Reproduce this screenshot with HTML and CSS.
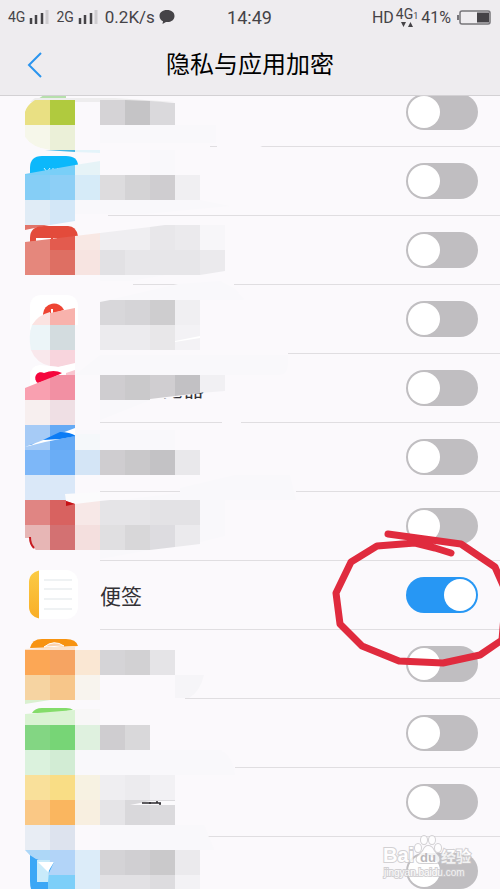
FILE: index.html
```html
<!DOCTYPE html>
<html lang="zh-CN">
<head>
    <meta charset="UTF-8">
    <meta name="viewport" content="width=device-width, initial-scale=1.0">
    <title>隐私与应用加密</title>
    <link rel="stylesheet" href="styles.css">
</head>
<body>
<header class="header">
    <div class="status">
        <div class="status-left">
            <span class="net">4G</span>
            <svg class="signal" width="20" height="16" viewBox="0 0 20 16"><path d="M2 9v6M7 6v9M13 4v11" stroke="#454347" stroke-width="2.500"/><path d="M18 1v14" stroke="#cfcdd0" stroke-width="3"/></svg>
            <span class="net">2G</span>
            <svg class="signal" width="20" height="16" viewBox="0 0 20 16"><path d="M2 9v6M7 6v9M13 4v11" stroke="#454347" stroke-width="2.500"/><path d="M18 1v14" stroke="#cfcdd0" stroke-width="3"/></svg>
            <span class="speed">0.2K/s</span>
            <svg class="bubble" width="16" height="16" viewBox="0 0 16 16"><path d="M8 1C3.500 1 .5 3.500 .5 7c0 2.500 1.500 4.500 3.500 5.300L3.500 15l3.500-2c5 .5 8.500-2 8.500-6C15.500 3.500 12.500 1 8 1z" fill="#454347"/></svg>
        </div>
        <span class="clock">14:49</span>
        <div class="status-right">
            <span class="hd">HD</span>
            <span class="mobile">
                <span>4G<small>1</small></span>
                <svg width="12" height="5" viewBox="0 0 12 5"><path d="M0 0h5L2.500 5zM7 5h5L9.500 0z" fill="#454347"/></svg>
            </span>
            <span class="percent">41%</span>
            <svg class="battery" width="34" height="15" viewBox="0 0 34 15"><rect x="3" y="1" width="30" height="13" rx="2" fill="none" stroke="#77757a" stroke-width="1.500"/><path d="M1 5v5" stroke="#77757a" stroke-width="2"/><path d="M20 2.500h12v10H20z" fill="#454347"/></svg>
        </div>
    </div>
    <div class="titlebar">
        <button class="back" type="button" aria-label="返回">
            <svg width="16" height="28" viewBox="0 0 16 28"><path d="M14 2L2 14l12 12" fill="none" stroke="#2a94ee" stroke-width="2"/></svg>
        </button>
        <h1>隐私与应用加密</h1>
    </div>
</header>

<main class="content">
    <ul class="apps">
        <li><input class="switch" type="checkbox" aria-label="应用 1"></li>
        <li><input class="switch" type="checkbox" aria-label="应用 2"></li>
        <li><input class="switch" type="checkbox" aria-label="应用 3"></li>
        <li><input class="switch" type="checkbox" aria-label="应用 4"></li>
        <li><input class="switch" type="checkbox" aria-label="应用 5"></li>
        <li><input class="switch" type="checkbox" aria-label="应用 6"></li>
        <li><input class="switch" type="checkbox" aria-label="应用 7"></li>
        <li>
            <svg class="app-icon" width="49" height="49" viewBox="0 0 49 49">
                <defs>
                    <linearGradient id="spine" x2="0" y2="1"><stop stop-color="#fbcb45"/><stop offset="1" stop-color="#f9ae27"/></linearGradient>
                </defs>
                <rect width="49" height="49" rx="12" fill="#fff"/>
                <path d="M10 .5v48C4 47 0 43 0 37V12C0 6 4 2 10 .5z" fill="url(#spine)"/>
                <path d="M15 10h28M15 19h28M15 29h28M15 39h28" stroke="#dfe5e8"/>
            </svg>
            <label for="notes">便签</label>
            <input class="switch" type="checkbox" id="notes" checked>
        </li>
        <li><input class="switch" type="checkbox" aria-label="应用 9"></li>
        <li><input class="switch" type="checkbox" aria-label="应用 10"></li>
        <li><input class="switch" type="checkbox" aria-label="应用 11"></li>
        <li><input class="switch" type="checkbox" aria-label="应用 12"></li>
    </ul>

    <!-- mosaic over the app names, viewBox starts below the header -->
    <svg class="mosaic" width="300" height="793" viewBox="0 96 300 793">
        <defs>
            <clipPath id="name-clip"><path d="M150 399l20-1 30-5 5-1v7h-55z"/></clipPath>
        </defs>

        <!-- covered parts of the dividers -->
        <g fill="#fbf9fc">
            <path d="M95 143h115v6H95zM217 143l30-3 20 9h-50zM95 212h13v6H95zM95 281h38v6H95zM178 281h56v6h-56z"/>
            <path d="M95 350h193v6H95zM222 419h19v6h-19zM180 488h116v6H180zM95 695h90v6H95zM95 764h140v6H95zM95 833h109v6H95z"/>
        </g>
        <g fill="#f9f8fb">
            <path d="M100 125h116v18H100zM150 150h25v25h-25zM75 200h125l30 6-85 8H75z"/>
            <path d="M100 275h65l-35 6h-30zM100 302l78-18 42-3 14 7 10 12H100z"/>
            <path d="M100 355h188v9q0 10-8 11H75zM100 400h50l-50 20zM75 430h100v20H75z"/>
            <path d="M180 488l55-13h55l6 25H120l60-7zM200 500h25v36l-25 6zM100 550h50l-50 9z"/>
            <path d="M75 750h145q13 7 15 25H75zM100 825h104l10 25H100z"/>
        </g>

        <!-- green app -->
        <path d="M44 95h22v4H38z" fill="#b6dfac"/>
        <path d="M35 98l80 0 60 4H30z" fill="#eeedee"/>
        <path d="M25 150v-38q2-7 10-12h15v25H25z" fill="#e9e083"/>
        <path d="M50 100h25v25H50z" fill="#b0ca3e"/>
        <path d="M25 125h25v25q-18-2-25-13z" fill="#f6f7ea"/>
        <path d="M25 137q7 11 25 13H25z" fill="#fbf9fc"/>
        <path d="M50 125h25v25H50z" fill="#ebf0d8"/>
        <path d="M100 100l25 0v25h-25z" fill="#d5d3d6"/>
        <path d="M125 100l25 1v24h-25z" fill="#c5c4c6"/>
        <path d="M150 101l25 2v22h-25z" fill="#dad9dc"/>

        <!-- light blue app -->
        <path d="M45 150h30v2z" fill="#45b7e4"/>
        <path d="M75 150h25v3l-25-1z" fill="#e4f4fa"/>
        <path d="M30 174v-6q0-12 12-12h24q12 0 12 10l-20 4z" fill="#0cb8fb"/>
        <path d="M44 168l3 4 3-4M53 168v3M57 168l3 3 2-3" fill="none" stroke="#d2f2fd"/>
        <path d="M25 174l50-9v10H25z" fill="#79cff8"/>
        <path d="M75 165l25-4v14H75z" fill="#e6f3f7"/>
        <path d="M25 175h25v25H25z" fill="#85cef6"/>
        <path d="M50 175h25v25H50z" fill="#8dcff6"/>
        <path d="M75 175h25v25H75z" fill="#d6ebf8"/>
        <path d="M100 175h25v25h-25z" fill="#dddcde"/>
        <path d="M125 175h25v25h-25z" fill="#d4d3d5"/>
        <path d="M150 175h25v25h-25z" fill="#cfcdd0"/>
        <path d="M175 175h25v25h-25z" fill="#f0eff2"/>
        <path d="M25 200h25v25H25z" fill="#e0ecf6"/>
        <path d="M50 200h25v21l-25 4z" fill="#d3e7f7"/>

        <!-- red app -->
        <path d="M25 225h24l-24 5z" fill="#e1756a"/>
        <path d="M30 242v-4q0-12 14-12h24q8 0 10 10l-20 4z" fill="#e34b3b"/>
        <path d="M36 238h15v3H36zM53 238h4v2h-4z" fill="#fff"/>
        <path d="M25 242l25-3v11H25z" fill="#e5877d"/>
        <path d="M50 239l25-3v14H50z" fill="#e35b4e"/>
        <path d="M75 236l25-3v17H75z" fill="#f8e8e4"/>
        <path d="M100 233l50-6v23h-50z" fill="#efeef1"/>
        <path d="M150 227l15-2h10v25h-25z" fill="#e8e7ea"/>
        <path d="M175 225h25v25h-25z" fill="#ebeaed"/>
        <path d="M200 225h25v25h-25z" fill="#f7f6f9"/>
        <path d="M25 250h25v25H25z" fill="#e5877c"/>
        <path d="M50 250h25v25H50z" fill="#de6f63"/>
        <path d="M75 250h25v25H75z" fill="#f7e4e1"/>
        <path d="M100 250h25v25h-25z" fill="#e2e1e4"/>
        <path d="M125 250h75v25h-75z" fill="#e7e6e9"/>
        <path d="M200 250h25v21l-25 4z" fill="#ebeaed"/>

        <!-- white app with the red dot -->
        <path d="M30 330v-23q0-12 12-12h24q12 0 12 12v18z" fill="#fff"/>
        <path d="M43 316v-2a11 11 0 0 1 21-4l-14 4z" fill="#ee4433"/>
        <path d="M52 309v4" stroke="#fff" stroke-width="2"/>
        <path d="M50 312v13H32q6-10 18-13z" fill="#fbe3e1"/>
        <path d="M50 313l25-5v17H50z" fill="#f8b2ac"/>
        <path d="M32 325h18v25H31q-3-14 1-25z" fill="#ecf5f8"/>
        <path d="M50 325h25v25H50z" fill="#d3dcdf"/>
        <path d="M31 350h19v16q-14-3-19-16z" fill="#f9e8ec"/>
        <path d="M50 350h25v14l-16 3-9-1z" fill="#f8d5dd"/>
        <path d="M100 302l10-2h15v25h-25z" fill="#d8d7da"/>
        <path d="M125 300h25v25h-25z" fill="#d5d4d7"/>
        <path d="M150 300h25v25h-25z" fill="#cecdcf"/>
        <path d="M175 300h25v25h-25z" fill="#f0eff2"/>
        <path d="M100 325h50v25h-50z" fill="#ecebee"/>
        <path d="M150 325h25v25h-25z" fill="#e8e7e9"/>
        <path d="M175 325h25v25h-25z" fill="#f3f2f5"/>
        <path d="M175 341l25-5v2l-25 4z" fill="#fff"/>

        <!-- crimson app -->
        <path d="M30 386v-10q0-10 10-11l18 2 17-4v8z" fill="#fff"/>
        <path d="M38 383a5 5 0 1 1 6-10q10-4 18 0l-12 6z" fill="#f5063c"/>
        <path d="M66 373l9-3v5h-9z" fill="#f9c5d0"/>
        <path d="M25 388l25-10v22H25z" fill="#f9a0b0"/>
        <path d="M50 378l8-3h17v25H50z" fill="#f290a3"/>
        <path d="M25 400h25v25H25z" fill="#f7efef"/>
        <path d="M50 400h25v25H50z" fill="#efdfe4"/>
        <path d="M100 375h25v25h-25z" fill="#cfcdd0"/>
        <path d="M125 375h25v25h-25z" fill="#cac9cb"/>
        <path d="M150 375h25v21l-25 3z" fill="#d0ced1"/>
        <path d="M175 375h25v18l-25 3z" fill="#c2c1c4"/>
        <path d="M200 375h25v16l-25 2z" fill="#f1f0f3"/>
        <text class="app-name" x="162" y="396" clip-path="url(#name-clip)">览器</text>

        <!-- blue app -->
        <path d="M25 425h25v25H25z" fill="#a6cbf6"/>
        <path d="M50 425h25v25H50z" fill="#65aaf5"/>
        <path d="M25 447l50-19v8l-30 6z" fill="#fff"/>
        <path d="M30 445l5-2-4 2zM43 440l17-8q10 0 16 4l-16 3z" fill="#0b7cf5"/>
        <path d="M75 434h25v16H75z" fill="#f5f8fa"/>
        <path d="M25 450h25v25H25z" fill="#7db7f8"/>
        <path d="M50 450h25v25H50z" fill="#6aadf6"/>
        <path d="M75 450h25v25H75z" fill="#d4e5f6"/>
        <path d="M100 450h25v25h-25z" fill="#cfcdd0"/>
        <path d="M125 450h25v25h-25z" fill="#c9c8ca"/>
        <path d="M150 450h25v25h-25z" fill="#c3c2c5"/>
        <path d="M175 450h25v25h-25z" fill="#e9e8eb"/>
        <path d="M25 475h50v25H25z" fill="#dae8f8"/>

        <!-- dark red app -->
        <path d="M25 500h25v25H25z" fill="#e08583"/>
        <path d="M50 500h25v25H50z" fill="#d86260"/>
        <path d="M65 494l35-2v10l-25 2-9-3z" fill="#fbfbfc"/>
        <path d="M66 501l9 3-9 2z" fill="#c71216"/>
        <path d="M75 504l25-3v24H75z" fill="#f7e8e7"/>
        <path d="M100 501l10-1h40v25h-50z" fill="#e5e4e7"/>
        <path d="M150 500h50v25h-50z" fill="#e3e2e5"/>
        <path d="M25 525h25v25H36q-6-4-6-12h-5z" fill="#e7b6b5"/>
        <path d="M30 537q0 7 4 11" fill="none" stroke="#c71a20" stroke-width="2"/>
        <path d="M50 525h25v25H50z" fill="#d37172"/>
        <path d="M75 525h25v25H75z" fill="#f4dfde"/>
        <path d="M100 525h25v25h-25z" fill="#e0dfe1"/>
        <path d="M125 525h25v25h-25z" fill="#d8d7d9"/>
        <path d="M150 525h25v22l-25 3z" fill="#dddce0"/>
        <path d="M175 525h25v19l-25 3z" fill="#ebeaed"/>

        <!-- orange app -->
        <path d="M30 648q2-9 12-9h24q10 0 12 7l-18 1z" fill="#f79310"/>
        <path d="M44 647q10-8 20-1z" fill="#fbd2ad" stroke="#fff"/>
        <path d="M25 649l50-3v4H25z" fill="#fbe3cc"/>
        <path d="M25 650h25v25H25z" fill="#fca755"/>
        <path d="M50 650h25v25H50z" fill="#f6a462"/>
        <path d="M75 650h25v25H75z" fill="#fae7d3"/>
        <path d="M100 650h25v25h-25z" fill="#d5d4d7"/>
        <path d="M125 650h25v25h-25z" fill="#d2d1d3"/>
        <path d="M150 650h25v25h-25z" fill="#e5e4e7"/>
        <path d="M25 675h25v25H25z" fill="#f6d4a2"/>
        <path d="M50 675h25v25H50z" fill="#f7c68a"/>
        <path d="M75 675h25v25H75z" fill="#f8f4ee"/>
        <path d="M175 675h29q-4 17-15 23h-14z" fill="#f6f5f8"/>

        <!-- green app -->
        <path d="M25 700h25l-25 4z" fill="#daf0d0"/>
        <path d="M32 713q3-5 10-5h24q5 0 7 2l-20 3z" fill="#84dc6a"/>
        <path d="M25 714l50-4v15H25z" fill="#daf3d3"/>
        <path d="M75 709h25v16H75z" fill="#f8f7f7"/>
        <path d="M25 725h25v25H25z" fill="#83d683"/>
        <path d="M50 725h25v25H50z" fill="#77d576"/>
        <path d="M75 725h25v25H75z" fill="#dff1df"/>
        <path d="M100 725h25v25h-25z" fill="#cfcdd0"/>
        <path d="M125 725h25v25h-25z" fill="#d9d8da"/>
        <path d="M25 750h25v25H25z" fill="#dbf2dd"/>
        <path d="M50 750h25v25H50z" fill="#d2ecd4"/>

        <!-- yellow app -->
        <path d="M25 775h25v25H25z" fill="#f9e09a"/>
        <path d="M50 775h25v25H50z" fill="#f9dd85"/>
        <path d="M75 775h25v25H75z" fill="#f7f2e2"/>
        <path d="M100 775h25v25h-25z" fill="#efeef1"/>
        <path d="M125 775h25v25h-25z" fill="#ecebee"/>
        <path d="M150 775h25v25h-25z" fill="#f2f1f4"/>
        <path d="M25 800h25v25H25z" fill="#fac885"/>
        <path d="M50 800h25v25H50z" fill="#fab65f"/>
        <path d="M75 800h25v25H75z" fill="#f8efe0"/>
        <path d="M100 800h25v25h-25z" fill="#e5e4e7"/>
        <path d="M125 800h25v25h-25z" fill="#d9d8db"/>
        <path d="M150 800h25v25h-25z" fill="#dbdadd"/>
        <path d="M130 805l20-4h25v4h-20z" fill="#fbfafc"/>
        <path d="M142 803h19M150 802v2M157 801v2M160 803v2" stroke="#2c2a2e" stroke-width="1.500"/>
        <path d="M25 825h25v25H25z" fill="#e8edf4"/>
        <path d="M50 825h25v25H50z" fill="#dde3ee"/>

        <!-- blue app at the bottom -->
        <path d="M30 854q8 8 24 8v27H31q-1-3-1-8z" fill="#3ba7f6"/>
        <path d="M25 850h25v12q-17-1-25-12z" fill="#add7f7"/>
        <path d="M50 850h25v25H48l6-13h-4z" fill="#b2d4f8"/>
        <path d="M48 875h27v14H48z" fill="#7dcff9"/>
        <path d="M37 860h13l-2 22H37z" fill="#c9ebfa"/>
        <path d="M38 862h16l-6 10z" fill="#fff"/>
        <path d="M75 850h25v39H75z" fill="#dcecf9"/>
        <path d="M100 850h25v25h-25z" fill="#d4d3d6"/>
        <path d="M125 850h25v25h-25z" fill="#d0cfd2"/>
        <path d="M150 850h25v25h-25z" fill="#cac9cb"/>
        <path d="M175 850h25v25h-25z" fill="#ebeaed"/>
        <path d="M100 875h50v14h-50z" fill="#e2e1e4"/>
        <path d="M150 875h25v14h-25z" fill="#dddcdf"/>
        <path d="M175 875h25v14h-25z" fill="#f3f2f5"/>
    </svg>

    <!-- hand drawn circle around the notes switch -->
    <svg class="marker" width="190" height="793" viewBox="310 96 190 793">
        <path d="M388 534L461 544 495 567 506 592 502 640 480 655 443 663 399 661 362 646 340 624 336 593 351 562 377 546 415 543 435 548 451 553" fill="none" stroke="#e02b3e" stroke-width="7" stroke-linecap="round" stroke-linejoin="round"/>
    </svg>

    <svg class="watermark" width="100" height="60" viewBox="380 829 100 60">
        <g fill="#fff" stroke="#c9c7ca" stroke-width="2" paint-order="stroke" opacity=".8">
            <ellipse cx="418" cy="848" rx="3" ry="4"/>
            <ellipse cx="424" cy="840" rx="3" ry="4"/>
            <ellipse cx="432" cy="840" rx="3" ry="4"/>
            <ellipse cx="438" cy="848" rx="3" ry="4"/>
            <path d="M428 846q4 0 6 5l5 6q2 7-6 6h-11q-7 0-5-6l6-6q2-5 5-5z"/>
            <text class="brand" x="383" y="862">Bai</text>
            <text class="brand-cn" x="441" y="862">经验</text>
            <text class="brand-url" x="384" y="876">jingyan.baidu.com</text>
        </g>
        <text class="brand-du" x="420" y="862">du</text>
    </svg>
</main>
</body>
</html>
```

FILE: styles.css
```css
* {
    box-sizing: border-box;
}

body {
    margin: 0;
    height: 100vh;
    display: flex;
    flex-direction: column;
    overflow: hidden;
    background-color: #fbf9fc;
    color: #333135;
    font-family: Roboto, "Noto Sans CJK SC", sans-serif;
}

.header {
    background-color: #eeecef;
    border-bottom: 1px solid #d3d1d4;
}

/* status bar */
.status {
    display: grid;
    grid-template-columns: 1fr auto 1fr;
    align-items: center;
    height: 34px;
    padding: 0 9px 0 8px;
    color: #454347;
}

.status-left,
.status-right {
    display: flex;
    align-items: center;
}

.status-right {
    justify-content: flex-end;
}

.net {
    font-size: 14px;
    margin-right: 4px;
}

.signal {
    margin-right: 7px;
}

.speed {
    font-size: 17px;
    margin-right: 4px;
}

.clock {
    font-size: 18px;
}

.hd {
    font-size: 16px;
    margin-right: 2px;
}

.mobile {
    display: flex;
    flex-direction: column;
    align-items: center;
    font-size: 14px;
    line-height: 12px;
    margin-right: 3px;
}

.mobile small {
    font-size: 9px;
}

.percent {
    font-size: 16px;
    margin-right: 6px;
}

/* title */
.titlebar {
    display: grid;
    grid-template-columns: 60px 1fr 60px;
    align-items: center;
    height: 61px;
}

.back {
    padding: 0 0 0 27px;
    border: 0;
    background: none;
    text-align: left;
    line-height: 0;
}

h1 {
    margin: 0;
    font-size: 24px;
    font-weight: 400;
    line-height: 32px;
    text-align: center;
    color: #000;
}

/* app list */
.content {
    position: relative;
    flex: 1;
    min-height: 0;
    overflow: hidden;
}

.apps {
    list-style: none;
    margin: -18px 0 0;
    padding: 0;
}

.apps li {
    display: flex;
    align-items: center;
    height: 69px;
    padding: 0 22px 2px 29px;
    background: linear-gradient(#e0dee1, #e0dee1) 100px 100% / 100% 1px no-repeat;
}

.app-icon {
    margin-right: 22px;
}

.apps label {
    font-size: 21px;
}

.switch {
    appearance: none;
    flex: none;
    width: 72px;
    height: 36px;
    margin: 0 0 0 auto;
    padding: 2px;
    border-radius: 18px;
    background-color: #c0bec1;
}

.switch::before {
    content: "";
    display: block;
    width: 32px;
    height: 32px;
    border-radius: 50%;
    background-color: #fff;
}

.switch:checked {
    background-color: #2797f4;
}

.switch:checked::before {
    margin-left: auto;
}

/* things drawn over the list */
.mosaic,
.marker,
.watermark {
    position: absolute;
    pointer-events: none;
}

.mosaic {
    top: 0;
    left: 0;
}

.marker {
    top: 0;
    right: 0;
}

.watermark {
    right: 20px;
    bottom: 0;
}

.app-name {
    font-size: 21px;
    fill: #333135;
}

.brand {
    font: bold 20px "Liberation Sans", sans-serif;
}

.brand-cn {
    font: bold 15px "Noto Sans CJK SC", sans-serif;
}

.brand-du {
    font: bold 13px "Liberation Sans", sans-serif;
    fill: #b9b7ba;
}

.brand-url {
    font: 10px "Liberation Sans", sans-serif;
}
```
